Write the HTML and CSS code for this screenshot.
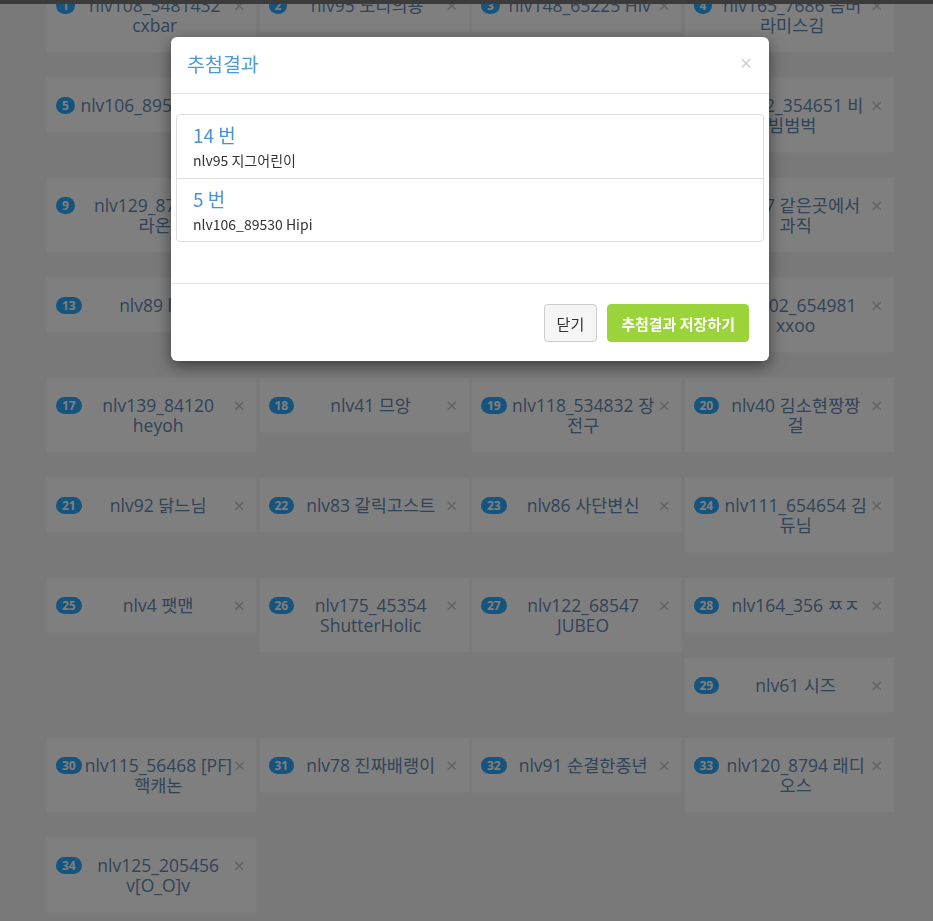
FILE: index.html
```html
<!DOCTYPE html>
<html>

<head>
    <title>추첨</title>
    <meta charset="utf-8">
    <link rel="stylesheet" href="styles.css">
</head>

<body>
    <div class="topbar"></div>

    <main class="board">
        <div class="slot"><span class="num">1</span><span class="name">nlv108_5481432<br>cxbar</span><span class="remove">×</span></div>
        <div class="slot"><span class="num">2</span><span class="name">nlv95 노디의용</span><span class="remove">×</span></div>
        <div class="slot"><span class="num">3</span><span class="name">nlv148_65225 Hiv</span><span class="remove">×</span></div>
        <div class="slot"><span class="num">4</span><span class="name">nlv165_7686 몸버<br>라미스김</span><span class="remove">×</span></div>

        <div class="slot"><span class="num">5</span><span class="name">nlv106_89530 Hipi</span><span class="remove">×</span></div>
        <div class="slot"><span class="num">6</span><span class="name">nlv57 하늘바다</span><span class="remove">×</span></div>
        <div class="slot"><span class="num">7</span><span class="name">nlv33 쿠키몬스터</span><span class="remove">×</span></div>
        <div class="slot"><span class="num">8</span><span class="name">nlv152_354651 비<br>빔범벅</span><span class="remove">×</span></div>

        <div class="slot"><span class="num">9</span><span class="name">nlv129_879654<br>라온</span><span class="remove">×</span></div>
        <div class="slot"><span class="num">10</span><span class="name">nlv71 하루</span><span class="remove">×</span></div>
        <div class="slot"><span class="num">11</span><span class="name">nlv88 달빛</span><span class="remove">×</span></div>
        <div class="slot"><span class="num">12</span><span class="name">nlv67 같은곳에서<br>과직</span><span class="remove">×</span></div>

        <div class="slot"><span class="num">13</span><span class="name">nlv89 lzzy</span><span class="remove">×</span></div>
        <div class="slot"><span class="num">14</span><span class="name">nlv95 지그어린이</span><span class="remove">×</span></div>
        <div class="slot"><span class="num">15</span><span class="name">nlv60 바람</span><span class="remove">×</span></div>
        <div class="slot"><span class="num">16</span><span class="name">nlv102_654981<br>xxoo</span><span class="remove">×</span></div>

        <div class="slot"><span class="num">17</span><span class="name">nlv139_84120<br>heyoh</span><span class="remove">×</span></div>
        <div class="slot"><span class="num">18</span><span class="name">nlv41 므앙</span><span class="remove">×</span></div>
        <div class="slot"><span class="num">19</span><span class="name">nlv118_534832 장<br>전구</span><span class="remove">×</span></div>
        <div class="slot"><span class="num">20</span><span class="name">nlv40 김소현짱짱<br>걸</span><span class="remove">×</span></div>

        <div class="slot"><span class="num">21</span><span class="name">nlv92 닭느님</span><span class="remove">×</span></div>
        <div class="slot"><span class="num">22</span><span class="name">nlv83 갈릭고스트</span><span class="remove">×</span></div>
        <div class="slot"><span class="num">23</span><span class="name">nlv86 사단변신</span><span class="remove">×</span></div>
        <div class="slot"><span class="num">24</span><span class="name">nlv111_654654 김<br>듀님</span><span class="remove">×</span></div>

        <div class="slot"><span class="num">25</span><span class="name">nlv4 팻맨</span><span class="remove">×</span></div>
        <div class="slot"><span class="num">26</span><span class="name">nlv175_45354<br>ShutterHolic</span><span class="remove">×</span></div>
        <div class="slot"><span class="num">27</span><span class="name">nlv122_68547<br>JUBEO</span><span class="remove">×</span></div>
        <div class="slot"><span class="num">28</span><span class="name">nlv164_356 ㅉㅈ</span><span class="remove">×</span></div>

        <div class="slot"><span class="num">29</span><span class="name">nlv61 시즈</span><span class="remove">×</span></div>

        <div class="slot"><span class="num">30</span><span class="name">nlv115_56468 [PF]<br>핵캐논</span><span class="remove">×</span></div>
        <div class="slot"><span class="num">31</span><span class="name">nlv78 진짜배랭이</span><span class="remove">×</span></div>
        <div class="slot"><span class="num">32</span><span class="name">nlv91 순결한종년</span><span class="remove">×</span></div>
        <div class="slot"><span class="num">33</span><span class="name">nlv120_8794 래디<br>오스</span><span class="remove">×</span></div>

        <div class="slot"><span class="num">34</span><span class="name">nlv125_205456<br>v[O_O]v</span><span class="remove">×</span></div>
    </main>

    <div class="backdrop"></div>

    <div class="modal">
        <div class="dialog">
            <div class="modal-header">
                <h4 class="modal-title">추첨결과</h4>
                <button class="close" type="button">×</button>
            </div>
            <div class="modal-body">
                <ul class="results">
                    <li>
                        <h4>14 번</h4>
                        <p>nlv95 지그어린이</p>
                    </li>
                    <li>
                        <h4>5 번</h4>
                        <p>nlv106_89530 Hipi</p>
                    </li>
                </ul>
            </div>
            <div class="modal-footer">
                <button class="btn" type="button">닫기</button>
                <button class="btn btn-save" type="button">추첨결과 저장하기</button>
            </div>
        </div>
    </div>
</body>

</html>
```

FILE: styles.css
```css
body {
    margin: 0;
    background-color: #f3f3f3;
    font-family: "Open Sans", "Noto Sans CJK KR", sans-serif;
    overflow: hidden;
}

.topbar {
    position: fixed;
    top: 0;
    left: 0;
    right: 0;
    height: 4px;
    background-color: #777;
    z-index: 5;
}

.board {
    width: 852px;
    margin: -23px 0 0 46px;
}

.slot {
    float: left;
    box-sizing: border-box;
    width: 211px;
    margin: 0 1.5px 24px 0;
    padding: 17px 11px 17px 9px;
    display: flex;
    align-items: flex-start;
    background-color: #fff;
    border: 1px solid #f6f6f6;
}

.num {
    flex: none;
    margin-top: 2px;
    padding: 2px 6px;
    border-radius: 10px;
    background-color: #2aa8f8;
    color: #fff;
    font-size: 12px;
    font-weight: bold;
    line-height: 13px;
}

.name {
    flex: 1;
    margin: 0 2px 0 3px;
    text-align: center;
    white-space: nowrap;
    color: #6488b0;
    font-size: 17.5px;
    line-height: 20px;
}

.remove {
    flex: none;
    padding-top: 2px;
    color: #c4c4c4;
    font-size: 20px;
    line-height: 18px;
}

.backdrop {
    position: fixed;
    top: 0;
    left: 0;
    right: 0;
    bottom: 0;
    background-color: rgba(0, 0, 0, 0.5);
    z-index: 10;
}

.modal {
    position: fixed;
    top: 0;
    left: 0;
    right: 0;
    bottom: 0;
    z-index: 20;
}

.dialog {
    width: 598px;
    margin: 37px 0 0 171px;
    background-color: #fff;
    border-radius: 6px;
    box-shadow: 0 5px 15px rgba(0, 0, 0, 0.5);
    font-family: "Noto Sans CJK KR", "Open Sans", sans-serif;
}

.modal-header {
    display: flex;
    align-items: center;
    justify-content: space-between;
    height: 53px;
    padding: 0 17px 3px 16px;
    border-bottom: 1px solid #e5e5e5;
}

.modal-title {
    margin: 0;
    color: #4b9bd4;
    font-size: 19.5px;
    font-weight: normal;
    line-height: 24px;
}

.close {
    padding: 0;
    border: 0;
    background: none;
    color: #000;
    opacity: 0.2;
    font-size: 21px;
    line-height: 1;
    font-family: "Open Sans", sans-serif;
}

.modal-body {
    padding: 20px 5px;
}

.results {
    margin: 0 0 21px;
    padding: 0;
    list-style: none;
    border: 1px solid #ddd;
    border-radius: 4px;
}

.results li {
    height: 63px;
    box-sizing: border-box;
    padding: 9px 16px;
}

.results li + li {
    border-top: 1px solid #ddd;
}

.results h4 {
    margin: 0 0 5px;
    color: #4a92d4;
    font-size: 19px;
    font-weight: normal;
    line-height: 22px;
}

.results p {
    margin: 0;
    color: #333;
    font-size: 14px;
    line-height: 18px;
}

.modal-footer {
    display: flex;
    justify-content: flex-end;
    gap: 10px;
    padding: 20px 20px 19px;
    border-top: 1px solid #e5e5e5;
}

.btn {
    height: 38px;
    padding: 0 12px;
    border: 1px solid #ccc;
    border-radius: 4px;
    background-color: #f5f5f5;
    color: #333;
    font-family: "Noto Sans CJK KR", sans-serif;
    font-size: 15px;
}

.btn-save {
    padding: 0 13px;
    border-color: #9bd43a;
    background-color: #9bd43a;
    color: #fff;
    font-weight: bold;
}
```
